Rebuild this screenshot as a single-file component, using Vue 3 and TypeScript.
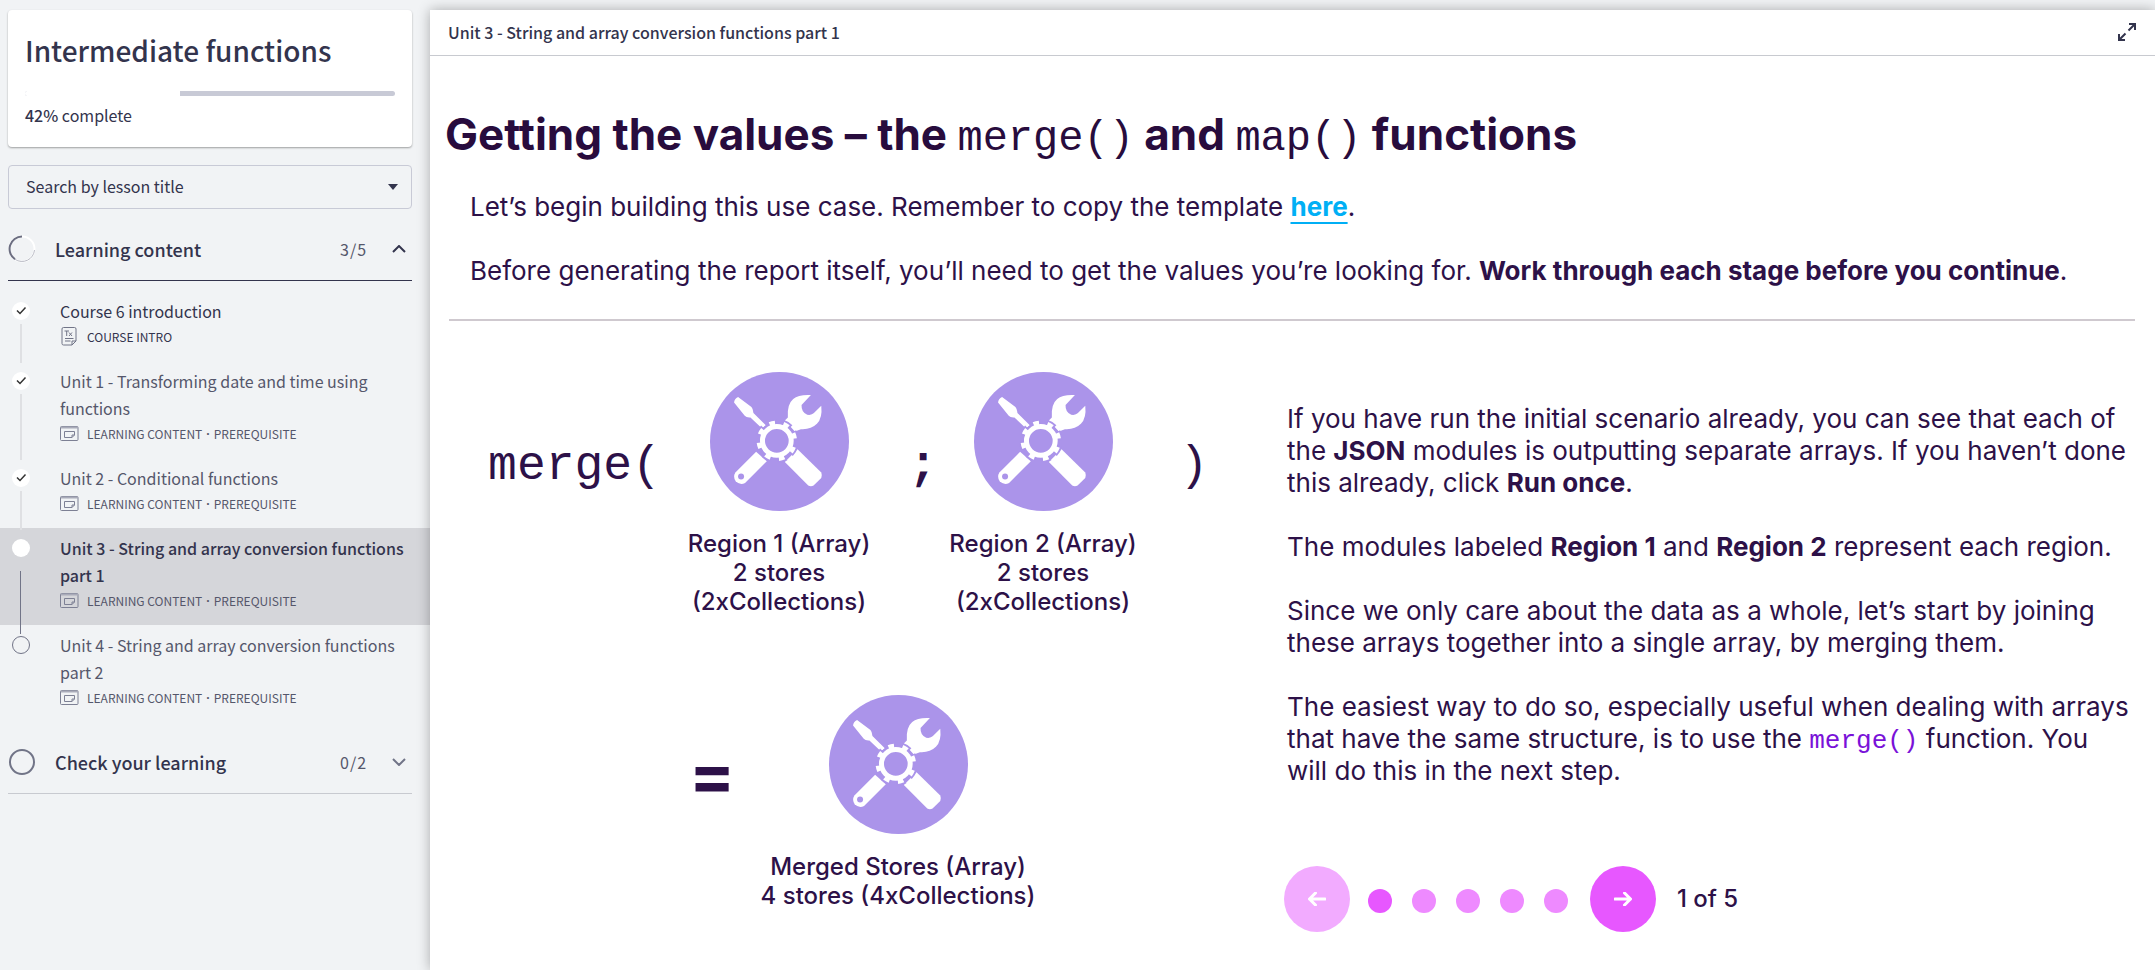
<script setup lang="ts">
import { ref } from 'vue'

interface Lesson {
  title: string
  kind: string[]
  state: 'done' | 'current' | 'todo'
  icon: 'text' | 'window'
}

const percent = ref(42)
const search = ref('')
const step = ref(0)
const steps = 5
const open = ref(true)

const lessons: Lesson[] = [
  { title: 'Course 6 introduction', kind: ['COURSE INTRO'], state: 'done', icon: 'text' },
  { title: 'Unit 1 - Transforming date and time using functions', kind: ['LEARNING CONTENT', 'PREREQUISITE'], state: 'done', icon: 'window' },
  { title: 'Unit 2 - Conditional functions', kind: ['LEARNING CONTENT', 'PREREQUISITE'], state: 'done', icon: 'window' },
  { title: 'Unit 3 - String and array conversion functions part 1', kind: ['LEARNING CONTENT', 'PREREQUISITE'], state: 'current', icon: 'window' },
  { title: 'Unit 4 - String and array conversion functions part 2', kind: ['LEARNING CONTENT', 'PREREQUISITE'], state: 'todo', icon: 'window' },
]
</script>

<template>
  <div class="app">
    <svg class="defs" aria-hidden="true">
      <symbol id="tools" viewBox="724 67 416 416">
        <circle cx="932" cy="275" r="208" fill="#ab94ea" />
        <g fill="#fff">
          <path d="M808 142 L848 172 Q853 177 854 190 L891 226 L880 236 L845 203 Q833 204 828 198 L796 158 Q797 147 808 142Z" />
          <path d="M1026 136 L998 166 Q997 188 1015 195 Q1029 197 1035 190 L1057 168 Q1061 205 1044 222 Q1026 240 996 238 L978 245 L948 212 L957 203 Q954 164 973 148 Q989 134 1026 136Z" />
          <path d="M862 306 L800 368 Q792 381 801 394 Q814 407 829 399 L894 334Z" />
          <path d="M986 298 L1057 368 Q1060 375 1057 384 L1034 407 Q1026 411 1018 407 L948 336Z" />
        </g>
        <circle cx="817" cy="380" r="9" fill="#ab94ea" />
        <circle cx="924" cy="273" r="53" fill="#ab94ea" stroke="#ab94ea" stroke-width="8" />
        <g fill="none">
          <circle cx="924" cy="273" r="57" stroke="#ab94ea" stroke-width="18" pathLength="80" stroke-dasharray="6 4" transform="rotate(-29 924 273)" />
          <circle cx="924" cy="273" r="43" stroke="#fff" stroke-width="15" />
          <circle cx="924" cy="273" r="54" stroke="#fff" stroke-width="13" pathLength="80" stroke-dasharray="4 6" transform="rotate(-25 924 273)" />
        </g>
      </symbol>
      <symbol id="icon-window" viewBox="0 0 19 15">
        <g fill="none" stroke="#7d8094" stroke-width="1">
          <rect x="0.5" y="0.5" width="17.5" height="14" rx="1" />
          <path d="M1 1.5h17" stroke="#a9abb9" stroke-width="2" />
          <path d="M4.500 5.500h10v3.500l-2.500 2.500h-7.500z M14.500 9h-2.500v2.500" />
        </g>
      </symbol>
      <symbol id="icon-text" viewBox="0 0 19 19">
        <g fill="none" stroke="#717487" stroke-width="1">
          <path d="M3.500 .5h11q1.500 0 1.500 1.500v12l-4 4h-8.500q-1.500 0-1.500-1.500v-14.500q0-1.500 1.500-1.500z" />
          <path d="M16 14h-4v4 M5 11.500h8.500 M5 14h5.500 M4.500 4h4.500 M6.700 4v5 M9 5.500l3 3.500 M12 5.500l-3 3.500" />
        </g>
      </symbol>
    </svg>

    <aside class="sidebar">
      <section class="course">
        <h1>Intermediate functions</h1>
        <div class="track" role="progressbar" aria-label="Course progress" :aria-valuenow="percent" aria-valuemin="0" aria-valuemax="100">
          <div class="fill" :style="{ width: percent + '%' }"></div>
        </div>
        <p><b>{{ percent }}%</b> complete</p>
      </section>

      <div class="search">
        <select v-model="search" aria-label="Search by lesson title">
          <option value="">Search by lesson title</option>
          <option v-for="l in lessons" :key="l.title" :value="l.title">{{ l.title }}</option>
        </select>
        <svg class="caret" viewBox="0 0 10 6" aria-hidden="true"><path d="M0 0h10l-5 6z" fill="#33344d" /></svg>
      </div>

      <button class="section" :aria-expanded="open" @click="open = !open">
        <svg class="ring" viewBox="0 0 28 28" aria-hidden="true">
          <circle cx="14" cy="14" r="12.500" fill="none" stroke="#fff" stroke-width="2" />
          <path d="M14 1.500A12.500 12.500 0 0 0 7 24.300" fill="none" stroke="#6b6d80" stroke-width="2" />
          <path d="M7 24.300A12.500 12.500 0 0 0 26.500 15" fill="none" stroke="#b9bac4" stroke-width="1" />
        </svg>
        <span class="name">Learning content</span>
        <span class="count">3/5</span>
        <svg class="chev" viewBox="0 0 14 8" aria-hidden="true"><path d="M1 7l6-6 6 6" fill="none" stroke="#33344d" stroke-width="2" /></svg>
      </button>

      <ul v-if="open" class="lessons">
        <li v-for="l in lessons" :key="l.title" :class="l.state">
          <span class="rail"><span class="badge">
            <svg v-if="l.state === 'done'" viewBox="0 0 18 18" aria-hidden="true"><path d="M5 8.500l3 3 5.500-6" fill="none" stroke="#333" stroke-width="1.500" /></svg>
          </span></span>
          <a href="#">
            <span class="title">{{ l.title }}</span>
            <span class="kind">
              <svg aria-hidden="true"><use :href="'#icon-' + l.icon" /></svg>
              <template v-for="(k, i) in l.kind" :key="k"><span v-if="i" class="dot">·</span><span>{{ k }}</span></template>
            </span>
          </a>
        </li>
      </ul>

      <button class="section muted" aria-expanded="false">
        <svg class="ring" viewBox="0 0 28 28" aria-hidden="true"><circle cx="14" cy="14" r="12" fill="none" stroke="#717487" stroke-width="2" /></svg>
        <span class="name">Check your learning</span>
        <span class="count">0/2</span>
        <svg class="chev" viewBox="0 0 14 8" aria-hidden="true"><path d="M1 1l6 6 6-6" fill="none" stroke="#717487" stroke-width="2" /></svg>
      </button>
    </aside>

    <main>
      <header>
        <span>Unit 3 - String and array conversion functions part 1</span>
        <button class="expand" aria-label="Full screen">
          <svg viewBox="0 0 18 18" aria-hidden="true"><path d="M11 1h6v6 M17 1l-6.500 6.500 M7 17h-6v-6 M1 17l6.500-6.500" fill="none" stroke="#33344d" stroke-width="2" /></svg>
        </button>
      </header>

      <article>
        <h2>Getting the values – the <code>merge()</code> and <code>map()</code> functions</h2>
        <div class="intro">
          <p>Let’s begin building this use case. Remember to copy the template <a href="#">here</a>.</p>
          <p>Before generating the report itself, you’ll need to get the values you’re looking for. <b>Work through each stage before you continue</b>.</p>
        </div>
        <hr />

        <div class="columns">
          <div class="diagram">
            <div class="call">
              <code>merge(</code>
              <figure><svg aria-hidden="true"><use href="#tools" /></svg><figcaption>Region 1 (Array)<br />2 stores<br />(2xCollections)</figcaption></figure>
              <code class="semi">;</code>
              <figure><svg aria-hidden="true"><use href="#tools" /></svg><figcaption>Region 2 (Array)<br />2 stores<br />(2xCollections)</figcaption></figure>
              <code>)</code>
            </div>
            <div class="result">
              <span class="equals">=</span>
              <figure><svg aria-hidden="true"><use href="#tools" /></svg><figcaption>Merged Stores (Array)<br />4 stores (4xCollections)</figcaption></figure>
            </div>
          </div>

          <div class="text">
            <p>If you have run the initial scenario already, you can see that each of the <b>JSON</b> modules is outputting separate arrays. If you haven’t done this already, click <b>Run once</b>.</p>
            <p>The modules labeled <b>Region 1</b> and <b>Region 2</b> represent each region.</p>
            <p>Since we only care about the data as a whole, let’s start by joining these arrays together into a single array, by merging them.</p>
            <p>The easiest way to do so, especially useful when dealing with arrays that have the same structure, is to use the <code>merge()</code> function. You will do this in the next step.</p>

            <nav class="pager" aria-label="Steps">
              <button class="arrow" :disabled="step === 0" aria-label="Previous" @click="step--">
                <svg viewBox="0 0 18 14" aria-hidden="true"><path d="M17 7h-15.500 M7.500 1l-6 6 6 6" /></svg>
              </button>
              <div class="dots">
                <button v-for="n in steps" :key="n" :class="{ on: n - 1 === step }" :aria-label="'Step ' + n" @click="step = n - 1"></button>
              </div>
              <button class="arrow" :disabled="step === steps - 1" aria-label="Next" @click="step++">
                <svg viewBox="0 0 18 14" aria-hidden="true"><path d="M1 7h15.500 M10.500 1l6 6-6 6" /></svg>
              </button>
              <span class="pos">{{ step + 1 }} of {{ steps }}</span>
            </nav>
          </div>
        </div>
      </article>
    </main>
  </div>
</template>

<style>
body { margin: 0; background: #f1f3f5; }
</style>

<style scoped>
* { box-sizing: border-box; }
h1, h2, p, ul, figure { margin: 0; padding: 0; }
button { font: inherit; color: inherit; background: none; border: 0; padding: 0; }
.app { display: flex; min-height: 100vh; font-family: "Noto Sans CJK SC", "Open Sans", sans-serif; color: #33344d; font-size: 16px; overflow: hidden; }
.defs { position: absolute; width: 0; height: 0; }

.sidebar { flex: 0 0 430px; padding-top: 10px; }
.course { margin: 0 18px 18px 8px; padding: 22px 17px 19px; background: #fff; border-radius: 4px; box-shadow: 0 1px 2px rgba(0, 0, 0, .35); }
h1 { font-size: 28px; line-height: 36px; font-weight: 500; }
.track { height: 5px; margin-top: 23px; background: #c8cad6; border-radius: 3px; overflow: hidden; }
.fill { height: 5px; background: #fff; }
.course p { margin-top: 7px; line-height: 25px; }
.course b { font-weight: 500; }
.search { position: relative; margin: 0 18px 9px 8px; }
select { display: block; width: 100%; height: 44px; padding: 0 16px 2px 17px; appearance: none; background: transparent; border: 1px solid #c8cad6; border-radius: 4px; font: inherit; color: inherit; }
.caret { position: absolute; right: 14px; top: 19px; width: 10px; height: 6px; }

.section { display: flex; align-items: center; width: calc(100% - 26px); height: 63px; margin: 0 18px 0 8px; border-bottom: 1px solid #33344d; text-align: left; }
.section.muted { border-color: #c8cad0; }
.ring { width: 28px; height: 28px; margin-right: 19px; }
.name { flex: 1; font-size: 18px; line-height: 26px; font-weight: 500; }
.count { width: 52px; color: #55576b; letter-spacing: 1px; }
.chev { width: 14px; height: 8px; margin-right: 6px; }

.lessons { list-style: none; padding: 10px 0 9px; }
li { display: flex; padding: 7px 18px 0 12px; color: #55576b; }
li:first-child { color: #33344d; }
li.current { background: #d5d6da; }
.rail { position: relative; width: 48px; }
.rail::after { content: ""; position: absolute; left: 8px; top: 26px; bottom: -2px; width: 2px; background: #dfe0e3; }
li.current .rail::after { width: 1px; top: 36px; bottom: -9px; background: #717487; }
li:last-child .rail::after { display: none; }
.badge { display: block; width: 18px; height: 18px; margin-top: 4px; border-radius: 50%; background: #fff; }
.badge svg { display: block; width: 18px; height: 18px; }
li.todo .badge { background: none; border: 1px solid #717487; }
li a { flex: 1; padding-bottom: 14px; color: inherit; text-decoration: none; }
.title { display: block; line-height: 27px; }
li.current .title { font-weight: 500; color: #33344d; }
.kind { display: flex; align-items: center; height: 22px; font-size: 12px; }
.kind svg { width: 19px; height: 19px; margin-right: 8px; }
.dot { margin: 0 4px; font-family: "Open Sans", sans-serif; font-weight: 700; }

main { flex: 1; min-width: 0; margin-top: 10px; background: #fff; box-shadow: 0 0 12px rgba(0, 0, 0, .3); color: #2d1148; font-family: Inter, "Open Sans", sans-serif; font-weight: 300; }
header { display: flex; align-items: center; justify-content: space-between; height: 46px; padding: 0 19px 2px 18px; border-bottom: 1px solid #c8cad0; font: 500 16px/24px "Noto Sans CJK SC", sans-serif; color: #33344d; }
.expand { width: 18px; height: 18px; }
.expand svg { display: block; width: 18px; height: 18px; }

article { padding: 50px 20px 0 15px; font-size: 26px; line-height: 32px; }
code { font-family: "Liberation Mono", monospace; }
h2 { font-size: 44px; line-height: 56px; font-weight: 700; color: #280c3d; }
h2 code { font-size: 42px; font-weight: 400; }
.intro { display: flex; flex-direction: column; gap: 32px; margin: 24px 0 32px 25px; font-weight: 400; }
b { font-weight: 700; }
.intro a { color: #00aff5; font-weight: 700; text-decoration-thickness: 2px; text-underline-offset: 6px; }
hr { height: 2px; margin: 0 0 0 4px; border: 0; background: #cfc9cf; }

.columns { display: grid; grid-template-columns: 842fr 848fr; padding-top: 51px; }
.call { display: grid; grid-template-columns: 173px 236px 52px 188px 114px; margin-left: 43px; text-align: center; }
.call code { margin-top: 65px; font-size: 48px; line-height: 58px; }
.call .semi { font-weight: 700; }
figure { display: flex; flex-direction: column; align-items: center; text-align: center; }
figure svg { width: 139px; height: 139px; margin-bottom: 18px; }
figcaption { font-size: 24px; line-height: 29px; font-weight: 500; }
.result { display: grid; grid-template-columns: 82px 290px; margin: 79px 0 0 226px; text-align: center; }
.equals { margin-top: 47px; font-size: 68px; line-height: 64px; font-weight: 700; }

.text { padding-top: 31px; }
.text p { margin-bottom: 32px; font-weight: 400; }
.text code { color: #7a12d8; line-height: 26px; }
.pager { display: flex; align-items: center; margin: 79px 0 0 -3px; }
.arrow { display: grid; place-items: center; width: 66px; height: 66px; border-radius: 50%; background: #e757ff; }
.arrow:disabled { background: #f2abff; }
.arrow svg { width: 18px; height: 14px; fill: none; stroke: #fff; stroke-width: 3; stroke-linecap: round; stroke-linejoin: round; }
.dots { display: flex; gap: 20px; margin: 4px 22px 0 18px; }
.dots button { width: 24px; height: 24px; border-radius: 50%; background: #ee8aff; }
.dots .on { background: #e757ff; }
.pos { margin-left: 21px; font-size: 24px; font-weight: 500; }
</style>
